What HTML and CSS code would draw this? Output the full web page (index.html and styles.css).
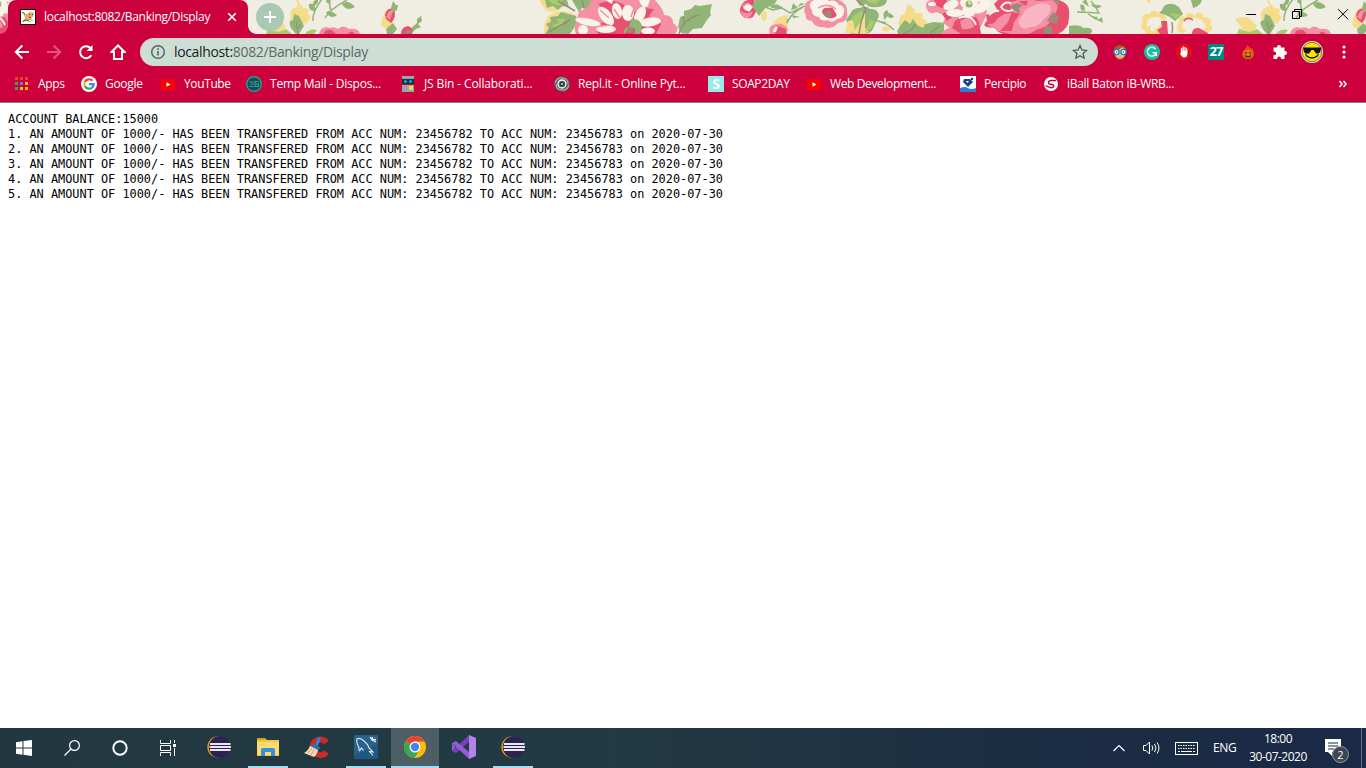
FILE: index.html
```html
<!DOCTYPE html>
<html lang="en">
<head>
<meta charset="utf-8">
<title>localhost:8082/Banking/Display</title>
<link rel="stylesheet" href="styles.css">
</head>
<body>
<svg class="defs" width="0" height="0" aria-hidden="true">
  <defs>
    <symbol id="youtube" viewBox="0 0 16 16"><rect x="1" y="3" width="14" height="11" rx="2.5" fill="#f00"/><path d="M6.5 6.2v4.6l4-2.3z" fill="#fff"/></symbol>
    <symbol id="eclipse" viewBox="0 0 24 24"><circle cx="11" cy="12" r="10.7" fill="#f7941e"/><circle cx="12.8" cy="12" r="11" fill="#213840"/><circle cx="13" cy="12" r="10.5" fill="#2c2255"/><path d="M3 9h20.5M2.5 12h21.5M3 15h20.5" stroke="#e8e6f2" stroke-width="1.8"/></symbol>
    <g id="floral">
      <path d="M290 14q2-8 8-7l3-3 2 4 6 1-1 5 3 3-4 6-4 1-3 6-9-1z" fill="#f5dc8b"/>
      <path d="M297-1q1 5 3 8" stroke="#f5dc8b" stroke-width="2" fill="none"/>
      <path d="M296 34q-8-8-6-13l3-1 1-6 5 2 3 6 2 4-5 8z" fill="#91b576"/>
      <path d="M298 34l-2-13M298 29l3-5" stroke="#998b78" fill="none"/>
      <path d="M267 34l2-4 10 2 7-3 6 5zM305 34q4-6 12-4l-3 4z" fill="#a8cb6b"/>
      <path d="M313 21q-1-9 9-22M325 18q5-9 22-18M331 10q-2-4-1-8" fill="none" stroke="#91b576" stroke-width="1.5"/>
      <path d="M309 4q7-2 6 7-7 0-6-7M326 13q2-5 11 2-5 5-11-2M342 4q6-5 13 3-9 5-13-3M313 4q0-4 5-5 1 5-4 7M326 2l1-4 5 0-3 6" fill="#91b576"/>
      <path d="M319 34q2-9 11-6 4-2 8 1 5-5 11 0 10-1 11 5z" fill="#f590a4"/><path d="M324 34q0-5 8-4l4 4M348 34q3-5 7 0" fill="#e8506d"/>
      <path d="M382 20q2-10 8-12 6 0 5 8l-4 11-7 1q-4-3-2-8z" fill="#f5dc8b"/>
      <path d="M385 15q2-8 9-6 3 8-3 14l-5-4z" fill="#e8506d"/><path d="M386 17q3-8 7-7l-3 10z" fill="#f590a4"/>
      <path d="M391 8l2-7 3 4 2 0-1 5-4 3zM387 34l-1-5 7-6 4 6-4 5M409 30l8-7 0-4 4-3 1 5-4 3 3 3-5 2-4 4" fill="#91b576"/>
      <path d="M401 34q0-7 7-8 6 2 4 8z" fill="#e8506d"/><path d="M404 34l4-5 4 3-2 2z" fill="#998b78"/>
      <path d="M540 0h27q-2 8-11 11-11 4-16-11M544 31q0-14 9-18 13-4 24 3 0 11-9 18h-24z" fill="#f5dc8b"/>
      <path d="M545 0h22l2 7-7-1-4 4-5-4-6 2zM545 34l4-6-3-4 5-2-1-5 8-1 3-4 15 4q3 6-6 18zM572 0h24l-6 10-8-2-3 4z" fill="#91b576"/>
      <path d="M548 0h14l-2 6-7-2zM549 32l8-4-6-3 8-2-3-4 9 0-4 8z" fill="#a8cb6b"/>
      <path d="M549 32l21-12M558 1l17 10M582 0l2 8" stroke="#998b78" stroke-width="1.5" fill="none"/>
      <path d="M576 34q-3-8 1-14l2-9 9-3 3-8h64q9 10 9 15 9 0 9 8 8 5 2 11z" fill="#f590a4"/>
      <path d="M598 4l8 8 5 8-15 5 2 9h58l5-10-12-8 5-7-11-1-13 6-7-10-12-4z" fill="#e8506d"/>
      <g fill="#f8f4e9"><ellipse cx="588" cy="22" rx="13" ry="3.500" transform="rotate(12 588 22)"/><ellipse cx="606" cy="16" rx="5.500" ry="11" transform="rotate(-38 606 16)"/><ellipse cx="617" cy="11" rx="5" ry="8" transform="rotate(-12 617 11)"/><ellipse cx="628" cy="13" rx="6" ry="8"/><ellipse cx="640" cy="15" rx="5" ry="9" transform="rotate(28 640 15)"/><ellipse cx="650" cy="22" rx="11" ry="4.500" transform="rotate(-8 650 22)"/><ellipse cx="606" cy="29" rx="10" ry="4"/><ellipse cx="648" cy="31" rx="7" ry="3.500"/><circle cx="583" cy="30" r="5"/><path d="M605 0h8l-1 4zM639 0h11l-2 6q-6 4-9-6z"/></g>
      <path d="M600 10l9 8M614 9l6 9M635 5l-4 12M595 27l15-2" stroke="#f590a4" stroke-width="1.500"/>
      <path d="M624 34q0-8 5-7l2-8q10-1 11 8l-2 7h-5q1-9-6-5z" fill="#91b576"/><circle cx="630" cy="30" r="3" fill="#998b78"/>
      <path d="M678 27l2-10 4-1 0-5 7-2 4-4 5 1 12-2-2 8 1 3-4 5-5 8-9 1-5 5-7-1z" fill="#91b576"/><path d="M679 34q4-15 20-19M684 23l-1-7" stroke="#998b78" stroke-width="1.3" fill="none"/>
      <path d="M740 12q0-10 8-12h6l4 8-5 9q-9 4-13-5z" fill="#e8506d"/><path d="M742 5q7-6 10 2-4 6-8 3zM740 10q6 6 13 1-2 8-9 7z" fill="#f590a4"/>
      <path d="M743 8q5-7 10-1l-4 5z" fill="#f8f4e9"/><path d="M752 6l3-6h22q-3 7-11 7l-7 9z" fill="#91b576"/>
      <path d="M765 7l8 3 9-2 8 5 15-7M787 23q3-9 16-16M788 19l-3 7" stroke="#91b576" stroke-width="1.5" fill="none"/>
      <path d="M770 7q5-6 13 1-9 2-13-1M791 10l2-7 5 5M792 15l8 2-7 1M797 7l4-4 4 1" fill="#91b576"/>
      <ellipse cx="764" cy="16" rx="3" ry="5" fill="#f5dc8b"/><path d="M773 23q6-8 15-8l-2 8-5 2zM779 24l9-1-1 7z" fill="#f5dc8b"/>
      <path d="M770 34q-3-9 6-10 8-1 12 5l-1 5z" fill="#f590a4"/><path d="M775 34l2-8 9 3 0 5z" fill="#e8506d"/><path d="M773 32q1-6 5-5l-2 5z" fill="#f8f4e9"/>
      <path d="M805 7q0-7 7-7h27q9 4 8 12 2 10-9 11-6 7-14 4-9 1-12-6-8-1-6-6-3-4-1-8z" fill="#f590a4"/>
      <path d="M810 4q2-5 8-4 7-2 11 1 7-2 10 4 6 1 5 6 0 7-7 8-5 5-9 1-7 2-9-3-8-1-7-7-3-2-2-6z" fill="#f8f4e9"/><path d="M822 12q1-5 6-4 5-2 7 4 4 4-2 6-8 1-11-6z" fill="#e8506d"/><path d="M818 8q9-6 18 1" fill="none" stroke="#f590a4" stroke-width="1.500"/><circle cx="828" cy="14" r="3.500" fill="#998b78"/>
      <path d="M856 0h31q-1 7-10 7-8 1-11-3l-6 2zM850 14q3-7 10-6 6-3 10 1 8-1 9 7l-5 10q-2 8-10 8h-14l-1-9-3-5z" fill="#91b576"/>
      <path d="M845 33l3-12 11-3 6-5 0 15 4 3-4 3z" fill="#f5dc8b"/><path d="M852 17l10-7 2 7-9 13M870 20l-5 12 6-3 4-8zM866 0h14l-4 4-6-1z" fill="#a8cb6b"/>
      <path d="M859 34q2-16 7-25-3-4-9-9" stroke="#998b78" stroke-width="1.5" fill="none"/>
      <path d="M874 20q14 3 20 10M884 19l6-6" stroke="#91b576" stroke-width="1.4" fill="none"/><path d="M884 18q-2-6 3-8 4 5-3 8M887 15q5-3 7 2-5 3-7-2M880 21l7 1-4 2" fill="#91b576"/><ellipse cx="886" cy="29" rx="4" ry="2.5" fill="#f5dc8b"/>
      <path d="M898 24l3-9 4-1 2-10 5 2 4 7 7 0-1 5 5 3-3 6-8 6-15-6z" fill="#f5dc8b"/><path d="M897 31l3-5 5-6 5 4 3-5 4 6 6 3 2-4 9-2 10 1v11h-46z" fill="#91b576"/><path d="M903 34q9-3 13-10M930 33l10-7" stroke="#998b78" fill="none" stroke-width="1.3"/>
      <path d="M926 7q-1-6 5-7h35l19 3q4 10-1 17l-7 14h-36q3-5 9-6l-7-5 3-7-10-4q-7 4-10-5z" fill="#f590a4"/>
      <path d="M934 0h12l4 5q-8 6-14 0M942 14q9-5 12 2l-7 5z" fill="#e8506d"/>
      <g fill="#f8f4e9"><ellipse cx="951" cy="5" rx="8" ry="4.500" transform="rotate(-20 951 5)"/><ellipse cx="955" cy="13" rx="9" ry="4"/><ellipse cx="969" cy="11" rx="7" ry="6"/><ellipse cx="982" cy="7" rx="9" ry="5" transform="rotate(-35 982 7)"/><ellipse cx="969" cy="3" rx="9" ry="6"/><ellipse cx="932" cy="4" rx="4" ry="2"/></g>
      <path d="M955 21q6-6 12-2l9-2 3 5 2 12h-20l-9-6z" fill="#e8506d"/><path d="M960 21q11-7 14 6-6 3-12 2z" fill="#f590a4"/><path d="M959 18q12-5 17 7" fill="none" stroke="#f8f4e9" stroke-width="2"/><circle cx="969" cy="4" r="3.500" fill="#91b576"/><path d="M967 0l5 3-3 2" fill="#f5dc8b"/>
      <path d="M987 21l-1-6q8-4 12-4l-4-7 4-4h61q12 4 10 15 1 14-11 19h-55l-15-7q-7-1-1-6z" fill="#e8506d"/>
      <path d="M987 24q8 1 10-5 7-7 16-6l-4-10 9-3h15l5 1 16-1q6 4 2 12-7 16-18 17l-9 5h-18l-17-4z" fill="#f590a4"/>
      <path d="M1020 26q-4-6 2-10 3-8 11-10 8-5 17-1 3 8-7 15-5 8-14 7-5 4-9-1z" fill="#f8b5c4"/><path d="M1000 31l8-9 4-10 8 2-6 8-2 9zM1018 1h10l-2 5" fill="#e8506d"/>
      <path d="M1011 3q-6-2-10 4 4 6 12 3M989 15q6-5 10-4M988 29q7-1 9 4" fill="none" stroke="#f8f4e9" stroke-width="2"/>
      <path d="M1010 6l7-3 7 2-5 3 1 6-5-3zM1047 21l6-9 6 5-2 7zM1043 31l4-6 5 2 1 7h-8zM1052-1h8l-2 7z" fill="#998b78"/>
      <path d="M1069 34v-8q11-2 14 2 10-1 9 4l-2 2z" fill="#91b576"/><path d="M1077 12l22 1q-3-6-8-12M1088 14l12 7" stroke="#91b576" stroke-width="1.4" fill="none"/><path d="M1080 5q5-2 5 6l-4-1zM1091 5q6-1 11 1-6 5-11-1M1082 2l4-3 3 8M1077 13l5-2 3 1M1090 16l8 1-2 3M1098 20l4-3 1 6" fill="#91b576"/>
      <g fill="#f5dc8b"><circle cx="1146" cy="26" r="5"/><circle cx="1147" cy="19" r="5"/><circle cx="1154" cy="16" r="5"/><circle cx="1161" cy="18" r="5"/><path d="M1146 28l13 6h-13zM1156 22l8 0 0 12h-10z"/><circle cx="1182" cy="28" r="5"/><circle cx="1183" cy="21" r="4.500"/><circle cx="1190" cy="17" r="4"/><circle cx="1199" cy="17" r="4.500"/><circle cx="1206" cy="22" r="5"/><circle cx="1208" cy="28" r="4"/></g>
      <path d="M1147 27q-2-9 7-10 7-1 9 5l-6 7q-6-6-10-2zM1182 28q-1-8 8-9 8-3 13 3 4 3 2 8l-9-4q-7 7-14 2z" fill="#f0eee2"/>
      <path d="M1161 21l6 0 1 13h-8l-3-4 5-3z" fill="#e8506d"/><path d="M1192 34q0-7 7-6l9 5v1z" fill="#e8506d"/><path d="M1184 21q3-5 9-1" fill="none" stroke="#e8506d" stroke-width="1.500"/>
      <path d="M1159 13q4-3 5-7 7-5 15 1l4 7-8 7q-8-7-16-8z" fill="#91b576"/><path d="M1169 13l12 1-5 5zM1237 34l2-5 8 1 8 4z" fill="#a8cb6b"/><path d="M1194 8l-2-8M1172 22q1 6 0 11" stroke="#998b78" stroke-width="1.4" fill="none"/><path d="M1191 0h11q-3 8-9 7z" fill="#91b576"/><path d="M1146 0l5 0-2 4z" fill="#f5dc8b"/>
      <path d="M1235 19q10-4 15 0l7 7-5 7h-13l3-5z" fill="#f5dc8b"/>
    </g>
  </defs>
</svg>
<div class="screen">
  <header class="tabstrip">
    <svg class="wallpaper" width="1366" height="34" viewBox="0 0 1366 34"><rect width="1366" height="34" fill="#f0eee2"/><use href="#floral" x="-971"/><use href="#floral"/><use href="#floral" x="971"/></svg>
    <div class="tab">
      <svg width="16" height="16" viewBox="0 0 16 16"><rect x=".5" y=".5" width="15" height="15" fill="#fff" stroke="#111"/><path d="M2 3l4 2 3-1 1-2 1.500 1.500L13.500 3v4L11 9l3 4-4-2-4 .5L3 13l-1-.5L5 9 4 6z" fill="#d9b26a"/><path d="M2 3l3 2M3 12.500l3-1.500 3 1M9 5l1 1M12 5.500h1M9 8l2 1" stroke="#4c3b1d" stroke-width=".9" fill="none"/><path d="M7 13h5l-2-1z" fill="#999"/></svg>
      <span class="tab-title">localhost:8082/Banking/Display</span>
      <svg width="10" height="10" viewBox="0 0 10 10"><path d="M1.2 1.2l7.6 7.6M8.8 1.2L1.2 8.8" stroke="#fff" stroke-width="1.6"/></svg>
    </div>
    <div class="new-tab"><svg width="14" height="14" viewBox="0 0 14 14"><path d="M7 1v12M1 7h12" stroke="#fff" stroke-width="1.8"/></svg></div>
    <div class="window-controls">
      <svg width="46" height="28" viewBox="0 0 46 28"><path d="M18 14.5h10" stroke="#000"/></svg>
      <svg width="46" height="28" viewBox="0 0 46 28"><path d="M18.500 11.500h7v7h-7zM20.500 11.500v-2h7v7h-2" fill="none" stroke="#000"/></svg>
      <svg width="46" height="28" viewBox="0 0 46 28"><path d="M18 9.200l10 10M28 9.200l-10 10" stroke="#000"/></svg>
    </div>
  </header>

  <nav class="toolbar">
    <svg width="16" height="16" viewBox="0 0 16 16"><path d="M15 8H2M8.300 1.500L1.800 8l6.500 6.500" fill="none" stroke="#fff" stroke-width="2"/></svg>
    <svg width="16" height="16" viewBox="0 0 16 16"><path d="M1 8h13M7.700 1.500L14.200 8l-6.500 6.500" fill="none" stroke="#e05580" stroke-width="2"/></svg>
    <svg width="16" height="16" viewBox="0 0 16 16"><path d="M13.300 11.200A6 6 0 1 1 12.500 4" fill="none" stroke="#fff" stroke-width="2"/><path d="M14.500 1v6h-6z" fill="#fff"/></svg>
    <svg width="16" height="16" viewBox="0 0 16 16"><path d="M8 1.500L1.500 8H4v7h8V8h2.500z" fill="none" stroke="#fff" stroke-width="2"/></svg>
    <div class="omnibox">
      <svg width="16" height="16" viewBox="0 0 16 16"><circle cx="8" cy="8" r="6.300" fill="none" stroke="#566" stroke-width="1.500"/><path d="M8 7v4.500M8 4.300v1.600" stroke="#566" stroke-width="1.600"/></svg>
      <span class="url"><b>localhost:</b>8082/Banking/Display</span>
      <svg width="16" height="16" viewBox="0 0 16 16"><path d="M8 1.600l1.900 4.300 4.700.5-3.500 3.100 1 4.700L8 11.800l-4.100 2.400 1-4.700-3.500-3.100 4.700-.5z" fill="none" stroke="#4c5855" stroke-width="1.300"/></svg>
    </div>
    <div class="extensions">
      <svg width="16" height="16" viewBox="0 0 16 16"><path d="M1.500 8q-.5-6 6.500-7 7 1 6.500 7z" fill="#a45a2b"/><path d="M2.500 7q5-1 8-4l3 4-.5 4q-1 4-5 4t-5-4z" fill="#edb98d"/><path d="M4.500 13q3.500 2 7 0l-1.500 2.500H6z" fill="#c37b45"/><circle cx="4.500" cy="8" r="2.600" fill="#fff" stroke="#1683b5" stroke-width="1.300"/><circle cx="11.500" cy="8" r="2.600" fill="#fff" stroke="#1683b5" stroke-width="1.300"/><path d="M4.200 8h1M10.800 8h1" stroke="#235" stroke-width="1.500"/></svg>
      <svg width="16" height="16" viewBox="0 0 16 16"><circle cx="8" cy="8" r="8" fill="#15c39a"/><path d="M11.500 5A4.500 4.500 0 1 0 12 9.500M12.300 12V8.700H8.500" fill="none" stroke="#fff" stroke-width="1.400"/></svg>
      <svg width="16" height="16" viewBox="0 0 16 16"><path d="M5 0h6l5 5v6l-5 5H5l-5-5V5z" fill="#e20d15"/><path d="M5.500 8V4.500M7.200 8V3M9 8V3.500M10.700 9V4.800" stroke="#fff" stroke-width="1.300" stroke-linecap="round"/><path d="M5 7h6.300v3q0 3.500-3.300 3.500-2 0-4-4.300l1-.5z" fill="#fff"/></svg>
      <span class="calendar">27</span>
      <svg width="16" height="16" viewBox="0 0 16 16"><path d="M7 1l4 4 1-1q2 3 2 6 0 5-6 5t-6-5q0-3 3-5 2-1 2-4z" fill="#e84e16"/><circle cx="8" cy="10.500" r="4.500" fill="#df7b12"/><path d="M6 8v2M10 8v2M5 11.500q3 3 6 0" fill="none" stroke="#511b0a" stroke-width="1.200"/></svg>
      <svg width="16" height="16" viewBox="0 0 16 16"><path d="M1.500 3.500H5V3a2 2 0 0 1 4 0v.5h3.500V7h.5a2 2 0 0 1 0 4h-.5v4H9v-.7a1.900 1.900 0 0 0-3.800 0v.7H1.500v-3.700h.7a1.900 1.900 0 0 0 0-3.800h-.7z" fill="#fff"/></svg>
      <svg width="22" height="22" viewBox="0 0 22 22"><circle cx="11" cy="11" r="11" fill="#eee"/><circle cx="11" cy="11" r="9.700" fill="#ffe600" stroke="#444" stroke-width=".7"/><path d="M2 6.500h18.500l-1.500 5-2 1h-2L12.500 9h-2L8 12.500H5l-1.800-1z" fill="#111"/><path d="M5 14.500q6 5 12 0M4.500 14l1-.8M17.500 14l-1-.8" fill="none" stroke="#111" stroke-width="1.300"/></svg>
      <svg width="16" height="16" viewBox="0 0 16 16"><circle cx="8" cy="3" r="1.600" fill="#fff"/><circle cx="8" cy="8" r="1.600" fill="#fff"/><circle cx="8" cy="13" r="1.600" fill="#fff"/></svg>
    </div>
  </nav>

  <nav class="bookmarks">
    <a class="bm w67"><svg width="16" height="16" viewBox="0 0 16 16"><path d="M1 2.500h3M6 2.500h3M11 2.500h3" stroke="#ea4335" stroke-width="3"/><path d="M1 7.500h3M1 12.500h3" stroke="#34a853" stroke-width="3"/><path d="M6 7.500h3" stroke="#4285f4" stroke-width="3"/><path d="M11 7.500h3M6 12.500h3M11 12.500h3" stroke="#fbbc05" stroke-width="3"/></svg><span>Apps</span></a>
    <a class="bm w79"><svg width="16" height="16" viewBox="0 0 16 16"><circle cx="8" cy="8" r="8" fill="#fff"/><g fill="none" stroke-width="2.200"><path d="M11.500 4.800A4.700 4.700 0 0 0 3.800 5.900" stroke="#ea4335"/><path d="M3.800 5.900a4.700 4.700 0 0 0 0 4.200" stroke="#fbbc05"/><path d="M3.800 10.100a4.700 4.700 0 0 0 7.200 1.500" stroke="#34a853"/><path d="M11 11.600a4.700 4.700 0 0 0 1.700-3.500H8" stroke="#4285f4"/></g></svg><span>Google</span></a>
    <a class="bm w86"><svg width="16" height="16"><use href="#youtube"/></svg><span class="mid">YouTube</span></a>
    <a class="bm w154"><svg width="16" height="16" viewBox="0 0 16 16"><circle cx="8" cy="8" r="7.300" fill="#20445b" stroke="#17a98c" stroke-width="1.400"/><path d="M3.500 6h4M4.500 8h3M3.500 10.500h4M12.500 5.500H9v5h3.500V8h-3" fill="none" stroke="#17b590" stroke-width="1.100"/></svg><span class="wide">Temp Mail - Dispos...</span></a>
    <a class="bm w154"><svg width="16" height="16" viewBox="0 0 16 16"><path d="M2 0h12v3H2zM2 9h12v7H2z" fill="#9aa4b1"/><path d="M2 3h12v5H2z" fill="#183347"/><circle cx="5.500" cy="5.500" r="1.300" fill="#19cbea"/><circle cx="10.500" cy="5.500" r="1.300" fill="#19cbea"/><path d="M9 10h4v4H9z" fill="#ffd83d"/></svg><span class="wider">JS Bin - Collaborati...</span></a>
    <a class="bm w154"><svg width="16" height="16" viewBox="0 0 16 16"><circle cx="8" cy="8" r="7.800" fill="#545c62"/><path d="M1 7Q3 1 9 2q5 1 5 6M15 9q-2 6-8 5-5-1-5-6" fill="none" stroke="#a7b0b5" stroke-width="1.200"/><circle cx="8" cy="8" r="4" fill="none" stroke="#fff" stroke-width="1.300"/><circle cx="8" cy="8" r="2.300" fill="#30383d"/><circle cx="8" cy="8" r="1" fill="#ddd"/></svg><span class="wide2">Repl.it - Online Pyt...</span></a>
    <a class="bm w98"><i class="soap">S</i><span class="tight">SOAP2DAY</span></a>
    <a class="bm w154"><svg width="16" height="16"><use href="#youtube"/></svg><span class="mid">Web Development...</span></a>
    <a class="bm w83"><svg width="16" height="16" viewBox="0 0 16 16"><path d="M0 0h16v16H0z" fill="#fff"/><path d="M0 12q5-2 8 0t8 0v4H0z" fill="#2e80cf"/><path d="M4 3h6l3 3-5 5-5-5z" fill="#164581"/><path d="M6 5h3L7.500 7z" fill="#fff"/><circle cx="12" cy="3" r="1.300" fill="#164581"/></svg><span class="mid">Percipio</span></a>
    <a class="bm"><svg width="16" height="16" viewBox="0 0 16 16"><circle cx="8" cy="8" r="7" fill="#fff"/><path d="M13 4.500H8.500Q5.500 4.500 5.500 6.500T8 8.200q3.500.3 2.500 2.500-1.500 2.300-8-1" fill="none" stroke="#cc003d" stroke-width="1.500"/></svg><span>iBall Baton iB-WRB...</span></a>
    <svg class="more" width="10" height="10" viewBox="0 0 10 10"><path d="M1.500 2L4 5 1.500 8M5.500 2L8 5 5.500 8" fill="none" stroke="#fff" stroke-width="1.600"/></svg>
  </nav>

  <main class="page"><pre>ACCOUNT BALANCE:15000
1. AN AMOUNT OF 1000/- HAS BEEN TRANSFERED FROM ACC NUM: 23456782 TO ACC NUM: 23456783 on 2020-07-30
2. AN AMOUNT OF 1000/- HAS BEEN TRANSFERED FROM ACC NUM: 23456782 TO ACC NUM: 23456783 on 2020-07-30
3. AN AMOUNT OF 1000/- HAS BEEN TRANSFERED FROM ACC NUM: 23456782 TO ACC NUM: 23456783 on 2020-07-30
4. AN AMOUNT OF 1000/- HAS BEEN TRANSFERED FROM ACC NUM: 23456782 TO ACC NUM: 23456783 on 2020-07-30
5. AN AMOUNT OF 1000/- HAS BEEN TRANSFERED FROM ACC NUM: 23456782 TO ACC NUM: 23456783 on 2020-07-30</pre></main>

  <footer class="taskbar">
    <div class="system">
      <svg width="16" height="16" viewBox="0 0 16 16"><path d="M0 2.300l6.500-1v6.200H0zM7.500 1.100L16 0v7.500H7.500zM0 8.500h6.500v6.200L0 13.800zM7.500 8.500H16V16l-8.500-1.200z" fill="#fff"/></svg>
      <svg width="16" height="16" viewBox="0 0 16 16"><circle cx="10.500" cy="5.500" r="4.900" fill="none" stroke="#fff" stroke-width="1.200"/><path d="M7 9l-6.500 6.500" stroke="#fff" stroke-width="1.300"/></svg>
      <svg width="16" height="16" viewBox="0 0 16 16"><circle cx="8" cy="8" r="6.700" fill="none" stroke="#fff" stroke-width="1.900"/></svg>
      <svg width="16" height="16" viewBox="0 0 16 16"><path d="M.5 0v3.500h10V0M.5 16v-3.500h10V16M.5 5.500h10v5H.5zM14.500 0v3M14.500 8v8" fill="none" stroke="#fff"/><path d="M13 4h3v3h-3z" fill="#fff"/></svg>
    </div>
    <div class="apps">
      <div class="app"><svg width="24" height="24"><use href="#eclipse"/></svg></div>
      <div class="app open"><svg width="24" height="24" viewBox="0 0 24 24"><path d="M1 3h8l2 2h12v16H1z" fill="#f9c73d"/><path d="M1 3h8l1 2H1z" fill="#d99c1c"/><path d="M1 7h22v13H1z" fill="#ffda70"/><path d="M5 21v-6q0-2 2-2h10q2 0 2 2v6h-4v-4H9v4z" fill="#3293db"/></svg></div>
      <div class="app"><svg width="26" height="24" viewBox="0 0 26 24"><path d="M22.500 7.500A7.800 7.800 0 1 0 22.500 17" fill="none" stroke="#cf2925" stroke-width="6"/><path d="M14 2l3 1-3 8-3-1z" fill="#2c83d0"/><path d="M8 9l8 3-1 3-9-3z" fill="#2674bc"/><path d="M6 11l8 4q-1 5-4 7L0 18q4-2 6-7z" fill="#fbdcb8"/><path d="M4 18l4-5M7 20l3-6" stroke="#cf9b68"/></svg></div>
      <div class="app open"><svg width="24" height="24" viewBox="0 0 24 24"><rect width="24" height="24" rx="1.500" fill="#20577f"/><path d="M0 0h24v9L0 21z" fill="#326f98" opacity=".45"/><path d="M5.500 16q-1-1.500-.5-3Q2 7 3 4q3-2 7 2 4 3 5 7l4 4-3.500-.5 3.500 4M5.500 16l2-3 2 2.500" fill="none" stroke="#e4edf3" stroke-width="1.100"/><path d="M16 2l2 3 4 2M18 2l1 3 3-.5" fill="none" stroke="#e4edf3" stroke-width="1.300"/></svg></div>
      <div class="app active"><svg width="24" height="24" viewBox="0 0 24 24"><circle cx="12" cy="12" r="11" fill="#fbbc05"/><path d="M12 12L2.500 6.500A11 11 0 0 1 21.500 6.500H12z" fill="#ea4335"/><path d="M12 12L2.500 6.500A11 11 0 0 0 11.500 23l5-8.500z" fill="#34a853"/><circle cx="12" cy="12" r="5.500" fill="#fff"/><circle cx="12" cy="12" r="4.200" fill="#4285f4"/></svg></div>
      <div class="app"><svg width="24" height="24" viewBox="0 0 24 24"><path d="M17 0l7 3v18l-7 3z" fill="#b183eb"/><path d="M17 0v7L4 18l-4-2z" fill="#7541b5"/><path d="M0 8l4-2 13 11v7L0 8v8l3-3V10z" fill="#955bd6"/></svg></div>
      <div class="app open"><svg width="24" height="24"><use href="#eclipse"/></svg></div>
    </div>
    <div class="tray">
      <svg class="chev" width="12" height="8" viewBox="0 0 12 8"><path d="M.5 7L6 1.500 11.500 7" fill="none" stroke="#fff" stroke-width="1.200"/></svg>
      <svg class="vol" width="18" height="14" viewBox="0 0 18 14"><path d="M1.500 4.500H4L7.500 1v12L4 9.500H1.500zM10 4.500q1.500 2.500 0 5M12.500 3q3 4 0 8M15 1.500q4 5.500 0 11" fill="none" stroke="#fff"/></svg>
      <svg class="kbd" width="23" height="13" viewBox="0 0 23 13"><rect x=".5" y=".5" width="22" height="12" fill="none" stroke="#fff"/><path d="M3 3.500h17M3 6.500h17" stroke="#fff" stroke-dasharray="1.500 1"/><path d="M3 9.500h2M6 9.500h11M18 9.500h2" stroke="#fff"/></svg>
      <span class="lang">ENG</span>
      <div class="clock"><span>18:00</span><span class="date">30-07-2020</span></div>
      <svg class="notice" width="26" height="26" viewBox="0 0 26 26"><path d="M0 2h16v13h-9v4l-4-4H0z" fill="#fff"/><path d="M3 6h10M3 9h10M3 12h6" stroke="#1b2b48"/><circle cx="15.500" cy="17.500" r="8" fill="#3e4654" stroke="#949aa5"/><text x="12.300" y="21.800" class="count">2</text></svg>
    </div>
  </footer>
</div>
</body>
</html>
```
FILE: styles.css
```css
* { box-sizing: border-box; }
body { margin: 0; background: #fff; overflow: hidden; font: 12px "Open Sans", "Noto Sans", sans-serif; }
svg { display: block; flex: none; }
.defs { position: absolute; }
.screen { width: 1366px; height: 768px; display: flex; flex-direction: column; }

.tabstrip { position: relative; height: 34px; flex: none; display: flex; align-items: flex-start; padding-left: 8px; }
.wallpaper { position: absolute; inset: 0; z-index: -1; }
.tab { position: relative; width: 240px; height: 34px; display: flex; align-items: center; padding: 0 11px 0 12px; background: #cc003d; border-radius: 8px 8px 0 0; color: #fff; }
.tab::before, .tab::after { content: ""; position: absolute; bottom: 0; width: 8px; height: 8px; }
.tab::before { left: -8px; background: radial-gradient(circle at 0 0, transparent 7.5px, #cc003d 8px); }
.tab::after { right: -8px; background: radial-gradient(circle at 100% 0, transparent 7.5px, #cc003d 8px); }
.tab-title { flex: 1; margin: -2px 0 0 8px; letter-spacing: -.3px; white-space: nowrap; }
.new-tab { width: 28px; height: 28px; margin: 3px 0 0 8px; border-radius: 50%; background: #a9c8b5; display: grid; place-items: center; }
.window-controls { display: flex; margin-left: auto; }

.toolbar { height: 36px; flex: none; background: #cc003d; display: flex; align-items: center; gap: 16px; padding-left: 14px; }
.omnibox { width: 958px; height: 28px; margin-left: -2px; border-radius: 14px; background: #cddfd5; display: flex; align-items: center; padding: 0 10px; }
.url { flex: 1; margin: -2px 0 0 8px; color: #5a6964; font-size: 14px; letter-spacing: -.35px; white-space: nowrap; }
.url b { font-weight: 400; color: #17201c; }
.extensions { display: flex; align-items: center; gap: 16px; margin-left: -2px; }
.extensions svg[width="22"] { margin: 0 -3px; }
.calendar { width: 16px; height: 16px; background: #00897b; color: #fff; font: bold 13px/14px "Noto Sans", sans-serif; letter-spacing: -1px; text-align: center; }

.bookmarks { height: 33px; flex: none; background: #cc003d; border-bottom: 1px solid #708d7b; display: flex; align-items: center; padding: 0 18px 4px 14px; color: #fff; }
.bm { display: flex; align-items: center; gap: 8px; white-space: nowrap; letter-spacing: -.3px; }
.bm span { margin-top: -2px; }
.wide { letter-spacing: -.23px; }
.wide2 { letter-spacing: -.2px; }
.wider { letter-spacing: -.13px; }
.mid, .tight { letter-spacing: -.38px; }
.w67 { width: 67px; } .w79 { width: 79px; } .w83 { width: 83px; } .w86 { width: 86px; } .w98 { width: 98px; } .w154 { width: 154px; }
.soap { width: 16px; height: 16px; background: #98ebe8; color: #fff; font: bold 14px/16px "Open Sans", sans-serif; text-align: center; }
.more { margin-left: auto; }

.page { flex: 1; padding: 9px 8px; }
.page pre { margin: 0; font: 11.88px/15px "DejaVu Sans Mono", monospace; color: #000; }

.taskbar { height: 40px; flex: none; display: flex; background: linear-gradient(90deg, #213840 0, #223a43 45%, #1b2d43 75%, #1a2946 100%); color: #fff; }
.system { display: flex; align-items: center; gap: 32px; padding: 0 18px 0 16px; }
.apps { display: flex; }
.app { width: 49px; height: 40px; display: grid; place-items: center; border-bottom: 2px solid transparent; background-clip: padding-box; }
.open { background: linear-gradient(#a5dcf5, #a5dcf5) center bottom / 40px 2px no-repeat border-box; }
.active { width: 48px; margin: 0 0 0 1px; background: #4d5f65; border-color: #a5dcf5; }
.tray { margin-left: auto; display: flex; align-items: center; padding-right: 10px; border-right: 1px solid #657085; margin-right: 4px; }
.vol { margin-left: 17px; }
.kbd { margin-left: 15px; }
.lang { width: 24px; margin: -1px 0 0 15px; letter-spacing: -.4px; }
.clock { width: 60px; margin-left: 11px; display: flex; flex-direction: column; align-items: center; line-height: 18px; letter-spacing: -.5px; }
.notice { margin: 4px 0 0 17px; }
.count { fill: #fff; font: 11px "Open Sans", sans-serif; }
```
